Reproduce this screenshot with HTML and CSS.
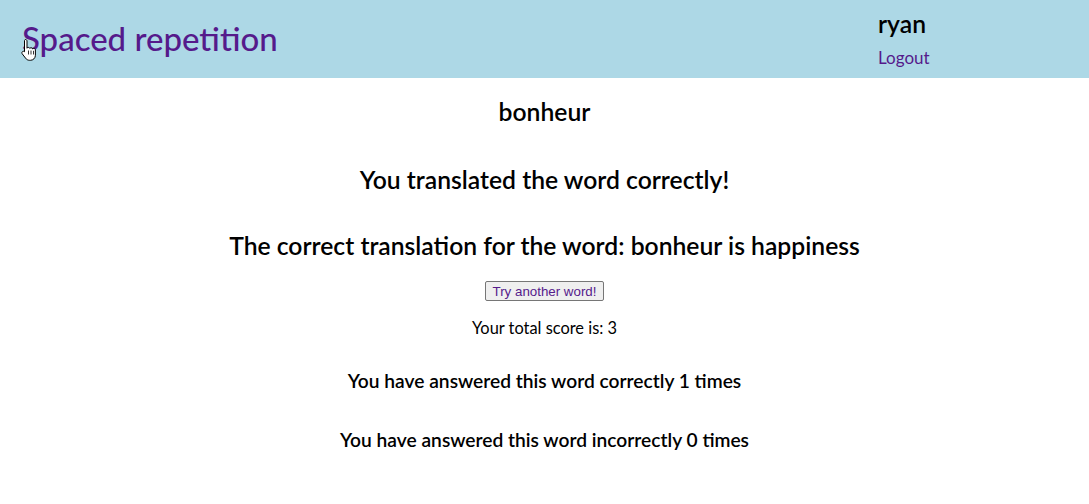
FILE: index.html
```html
<!DOCTYPE html>
<html lang="en">
<head>
<meta charset="utf-8">
<title>Spaced repetition</title>
<link rel="stylesheet" href="styles.css">
</head>
<body>
<header class="topbar">
  <h1 class="brand"><a href="#">Spaced repetition</a></h1>
  <div class="user">
    <span class="user-name">ryan</span>
    <a class="logout" href="#">Logout</a>
  </div>
  <svg class="cursor" width="16" height="24" viewBox="0 0 16 24" aria-hidden="true">
    <path d="M4.5 1.5c.8 0 1.5.7 1.5 1.5v7.2c.3-.5.8-.8 1.4-.8.7 0 1.2.4 1.4 1 .3-.4.8-.7 1.3-.7.8 0 1.4.5 1.5 1.2.3-.3.7-.5 1.2-.5.9 0 1.6.7 1.6 1.6v5.3c0 2.9-2.3 5-5 5H8.6c-1.6 0-3-.7-3.9-2L1.2 15.8c-.5-.7-.4-1.7.3-2.2.7-.5 1.6-.4 2.1.2l-.1-.1V3c0-.8.2-1.5 1-1.5z" fill="#fff" stroke="#000" stroke-width="1"/>
    <path d="M7.5 12.5v4M10 12.5v4M12.5 12.8v3.7" stroke="#000" stroke-width="0.8" fill="none"/>
  </svg>
</header>
<main class="result">
  <h2 class="word">bonheur</h2>
  <h2 class="feedback">You translated the word correctly!</h2>
  <h2 class="answer">The correct translation for the word: bonheur is happiness</h2>
  <button class="next-btn" type="button">Try another word!</button>
  <p class="score">Your total score is: 3</p>
  <h3 class="count count-correct">You have answered this word correctly 1 times</h3>
  <h3 class="count count-wrong">You have answered this word incorrectly 0 times</h3>
</main>
</body>
</html>
```

FILE: styles.css
```css
html, body {
  margin: 0;
  padding: 0;
  background: #fff;
}
body {
  font-family: Lato, "Open Sans", sans-serif;
  color: #000;
}
.topbar {
  position: relative;
  display: flex;
  justify-content: space-between;
  align-items: flex-start;
  height: 78px;
  padding: 0 22px;
  background: #add8e6;
  box-sizing: border-box;
}
.brand {
  margin: 20px 0 0;
  font-size: 33px;
  line-height: 37px;
  font-weight: 500;
}
.brand a {
  color: #551a8b;
  text-decoration: none;
}
.user {
  display: flex;
  flex-direction: column;
  width: 189px;
  padding-top: 10px;
}
.user-name {
  font-size: 24.7px;
  line-height: 28px;
  font-weight: 600;
}
.logout {
  margin-top: 11px;
  font-size: 17px;
  line-height: 18px;
  color: #551a8b;
  text-decoration: none;
}
.cursor {
  position: absolute;
  left: 21px;
  top: 38px;
}
.result {
  display: flex;
  flex-direction: column;
  align-items: center;
  text-align: center;
}
.result h2 {
  font-size: 24.7px;
  line-height: 28px;
  font-weight: 600;
  margin: 0;
}
.word { margin-top: 20px !important; }
.feedback { margin-top: 40px !important; }
.answer { margin-top: 38px !important; }
.next-btn {
  margin-top: 21px;
  height: 20px;
  padding: 1px 7px;
  font-family: "Liberation Sans", Arial, sans-serif;
  font-size: 13.33px;
  color: #551a8b;
  background: #efefef;
  border: 1px solid #767676;
  border-radius: 2px;
}
.score {
  margin: 18px 0 0;
  font-size: 16.4px;
  line-height: 18px;
}
.count {
  margin: 0;
  font-size: 19.2px;
  line-height: 22px;
  font-weight: 600;
}
.count-correct { margin-top: 33px; }
.count-wrong { margin-top: 37px; }
```
